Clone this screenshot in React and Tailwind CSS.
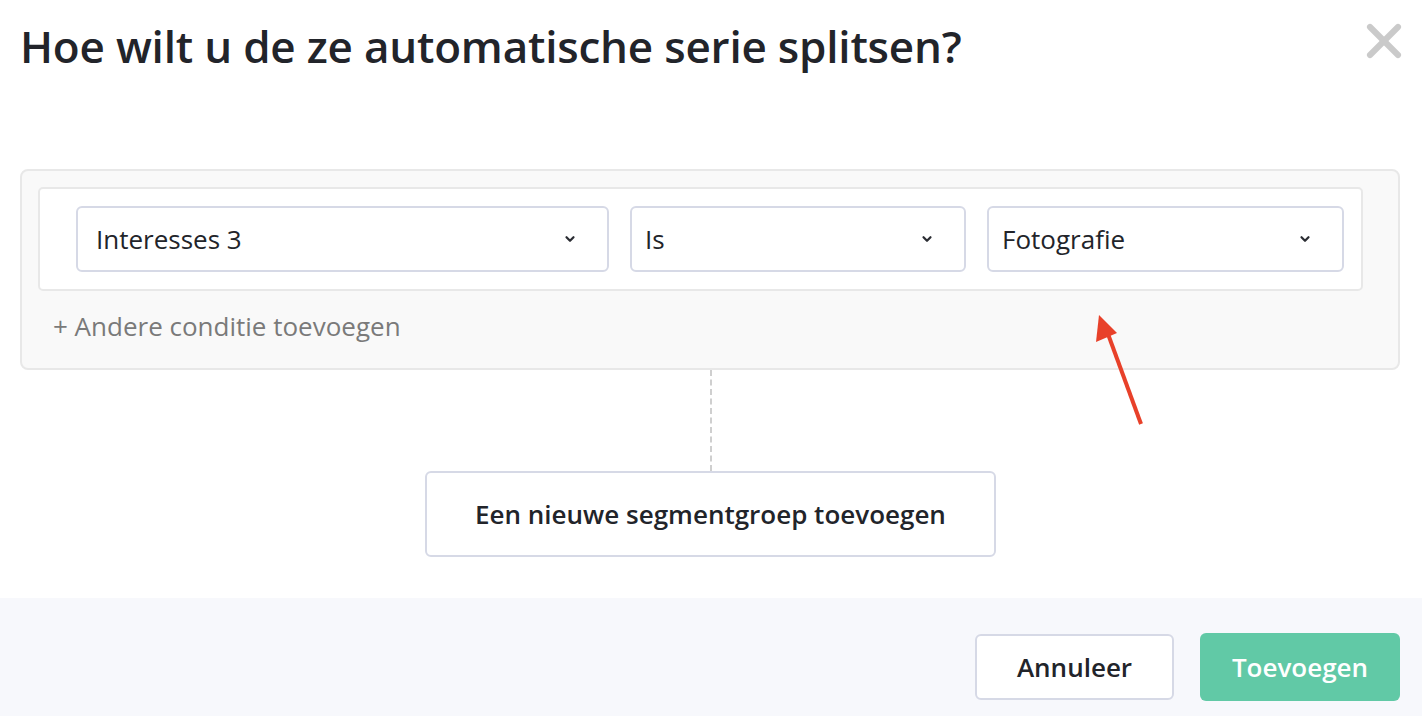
import { X } from 'lucide-react';

function Chevron() {
  return (
    <svg className="w-[14px] h-[14px] text-[#2b2d33]" viewBox="0 0 12 12" fill="none" stroke="currentColor">
      <path d="M3 4.5l3 3 3-3" strokeWidth={1.9} strokeLinecap="round" strokeLinejoin="round" />
    </svg>
  );
}

function Select({ label, className, padLeft }) {
  return (
    <div className={`h-[66px] rounded-[6px] border-2 border-[#d6d9e6] bg-white flex items-center justify-between pr-[30px] ${padLeft} ${className}`}>
      <span className="text-[26px] text-[#22242a]">{label}</span>
      <Chevron />
    </div>
  );
}

export default function App() {
  return (
    <div className="w-[1422px] h-[716px] bg-white flex flex-col relative overflow-hidden" style={{ fontFamily: '"Open Sans", "Noto Sans", sans-serif' }}>
      {/* Header */}
      <div className="h-[103px] flex items-start justify-between pl-[20px] pr-[10px] pt-[16px]">
        <h1 className="text-[44px] font-semibold text-[#22242a] leading-[60px] tracking-[-0.2px]">Hoe wilt u de ze automatische serie splitsen?</h1>
        <X className="w-[56px] h-[56px] text-[#cacaca] -mt-[3px]" strokeWidth={2.6} />
      </div>

      {/* Body */}
      <div className="flex-1 flex flex-col pl-[20px] pr-[22px] pt-[66px]">
        <div className="rounded-[8px] border-2 border-[#e8e8e8] bg-[#f9f9f9] pt-[16px] pl-[16px] pr-[35px] h-[201px]">
          <div className="rounded-[5px] border-2 border-[#e8e8e8] bg-white h-[104px] flex items-center pl-[36px] pr-[17px] gap-[21px]">
            <Select label="Interesses 3" className="w-[533px]" padLeft="pl-[18px]" />
            <Select label="Is" className="w-[336px]" padLeft="pl-[13px]" />
            <Select label="Fotografie" className="w-[357px]" padLeft="pl-[13px]" />
          </div>
          <div className="pl-[15px] pt-[16px] text-[26px] text-[#7a7a7a]">+ Andere conditie toevoegen</div>
        </div>
        <div className="flex flex-col items-center pl-[1px]">
          <div className="h-[101px] border-l-2 border-dashed border-[#cfcfcf]" />
          <button className="w-[571px] h-[86px] rounded-[6px] border-2 border-[#d6d9e6] bg-white text-[26px] font-semibold text-[#22242a]">
            Een nieuwe segmentgroep toevoegen
          </button>
        </div>
      </div>

      {/* Footer */}
      <div className="h-[118px] bg-[#f7f8fc] flex items-start justify-end gap-[26px] pr-[22px] pt-[36px]">
        <button className="w-[199px] h-[66px] rounded-[6px] border-2 border-[#d6d9e6] bg-white text-[26px] font-semibold text-[#22242a]">Annuleer</button>
        <button className="w-[200px] h-[68px] -mt-[1px] rounded-[6px] bg-[#61c9a6] text-[26px] font-semibold text-white">Toevoegen</button>
      </div>

      {/* Annotation arrow */}
      <svg className="absolute left-[1080px] top-[300px] w-[80px] h-[140px] pointer-events-none" viewBox="0 0 80 140">
        <line x1="61" y1="124" x2="28" y2="34" stroke="#e8412a" strokeWidth="4" />
        <polygon points="19,15 16,42 37,33" fill="#e8412a" />
      </svg>
    </div>
  );
}
